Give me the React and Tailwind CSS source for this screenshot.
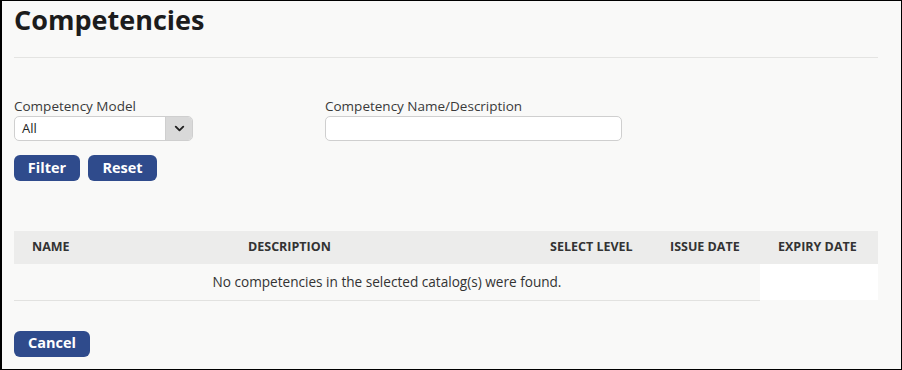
import { ChevronDown } from 'lucide-react';

const font = { fontFamily: '"Open Sans", "Liberation Sans", sans-serif' };

const Button = ({ children, className = '' }) => (
  <button
    className={`h-[26px] rounded-[6px] bg-[#2f4b8c] text-white text-[14.5px] font-bold leading-none ${className}`}
  >
    {children}
  </button>
);

const App = () => {
  return (
    <div
      className="w-[902px] h-[370px] border border-black border-l-2 bg-[#f9f9f8] text-[#333] overflow-hidden"
      style={font}
    >
      <div className="pl-[12px] pr-[23px]">
        <h1 className="text-[27px] font-bold leading-[36px] text-[#1c1c1c] pt-[1px]">Competencies</h1>
        <div className="mt-[19px] border-t border-[#e4e4e2]" />

        <div className="flex mt-[39px]">
          <div className="w-[311px]">
            <label className="block text-[13.5px] leading-[18px] text-[#3a3a3a]">Competency Model</label>
            <div className="flex w-[179px] h-[25px] mt-[1px] rounded-[5px] border border-[#cfcfcf] bg-white overflow-hidden">
              <span className="flex-1 text-[13px] leading-[23px] pl-[7px] text-[#222]">All</span>
              <span className="w-[27px] flex items-center justify-center bg-[#d9d9d9] border-l border-[#cfcfcf]">
                <ChevronDown size={15} strokeWidth={3} className="text-[#222]" />
              </span>
            </div>
          </div>
          <div>
            <label className="block text-[13.5px] leading-[18px] text-[#3a3a3a]">Competency Name/Description</label>
            <input
              className="block w-[297px] h-[25px] mt-[1px] rounded-[5px] border border-[#cfcfcf] bg-white"
              type="text"
            />
          </div>
        </div>

        <div className="flex gap-[8px] mt-[14px]">
          <Button className="w-[66px]">Filter</Button>
          <Button className="w-[69px]">Reset</Button>
        </div>

        <table className="w-[864px] mt-[50px] border-collapse table-fixed">
          <colgroup>
            <col className="w-[216px]" />
            <col className="w-[302px]" />
            <col className="w-[120px]" />
            <col className="w-[108px]" />
            <col className="w-[118px]" />
          </colgroup>
          <thead>
            <tr className="bg-[#ececeb] h-[33px]">
              {['Name', 'Description', 'Select Level', 'Issue Date', 'Expiry Date'].map((h) => (
                <th key={h} className="text-left pl-[18px] text-[12.5px] font-bold uppercase text-[#333] whitespace-nowrap">
                  {h}
                </th>
              ))}
            </tr>
          </thead>
          <tbody>
            <tr className="h-[36px]">
              <td colSpan={4} className="text-center text-[13.6px] text-[#333] border-b border-[#e2e2e0]">
                No competencies in the selected catalog(s) were found.
              </td>
              <td className="bg-white" />
            </tr>
          </tbody>
        </table>

        <Button className="w-[76px] mt-[30px]">Cancel</Button>
      </div>
    </div>
  );
};

export default App;
